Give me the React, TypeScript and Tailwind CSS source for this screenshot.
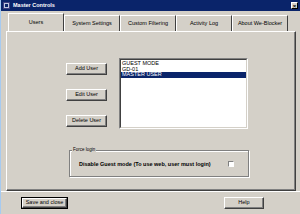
import React from "react";

const raised =
  "border border-t-white border-l-white border-r-[#404040] border-b-[#404040] shadow-[inset_-1px_-1px_0_#808080]";

function Btn({ label, w, def }: { label: string; w: string; def?: boolean }) {
  return (
    <div className={`${def ? "border border-black" : ""} ${w} h-[12px] flex`}>
      <div className={`${raised} flex-1 flex items-center justify-center bg-[#d4d0c8] text-[5.5px] leading-none text-black`}>
        {label}
      </div>
    </div>
  );
}

function Tab({ label, selected }: { label: string; selected?: boolean }) {
  return (
    <div
      className={`w-[56px] flex items-center justify-center border-t border-l border-t-white border-l-white border-r border-r-[#404040] text-[5.5px] leading-none text-black bg-[#d4d0c8] ${
        selected ? "h-[18px] -mb-[1px] z-10 relative" : "h-[16px] mt-[2px]"
      }`}
    >
      {label}
    </div>
  );
}

export default function App() {
  return (
    <div
      className="w-[300px] h-[214px] bg-[#d4d0c8] flex flex-col overflow-hidden border-l border-l-[#a6caf0]"
      style={{ fontFamily: '"Liberation Sans", Arial, sans-serif' }}
    >
      <div className="h-[11px] bg-[#0a246a] flex items-center px-[2px] shrink-0">
        <div className="w-[7px] h-[7px] bg-[#c0c8e0] border border-[#404080] flex items-center justify-center">
          <div className="w-[3px] h-[3px] bg-[#0a246a]" />
        </div>
        <span className="ml-[3px] text-white font-bold text-[5.5px] leading-none">Master Controls</span>
        <div className="ml-auto w-[7px] h-[7px] bg-[#d4d0c8] border border-t-white border-l-white border-r-black border-b-black flex items-center justify-center text-[6px] leading-none text-black font-bold">
          ×
        </div>
      </div>
      <div className="flex flex-col pl-[5px] pr-[4px] pt-[2px]">
        <div className="flex ml-[2px]">
          <Tab label="Users" selected />
          <Tab label="System Settings" />
          <Tab label="Custom Filtering" />
          <Tab label="Activity Log" />
          <Tab label="About We-Blocker" />
        </div>
        <div className="h-[160px] border border-t-white border-l-white border-r-[#404040] border-b-[#404040] shadow-[inset_-1px_-1px_0_#808080] flex flex-col">
          <div className="flex ml-[59px] mt-[26px]">
            <div className="w-[41px] flex flex-col pt-[5px] gap-[14px]">
              <Btn label="Add User" w="w-[41px]" />
              <Btn label="Edit User" w="w-[41px]" />
              <Btn label="Delete User" w="w-[41px]" />
            </div>
            <div className="ml-[12px] w-[129px] h-[71px] border border-t-[#808080] border-l-[#808080] border-r-white border-b-white">
              <div className="h-full bg-white border border-t-[#404040] border-l-[#404040] border-r-[#d4d0c8] border-b-[#d4d0c8] pt-[1px] text-[5.5px] leading-[5.5px] text-black">
                <div className="px-[1px]">GUEST MODE</div>
                <div className="px-[1px]">GD-01</div>
                <div className="px-[1px] bg-[#0a246a] text-white">MASTER USER</div>
              </div>
            </div>
          </div>
          <div className="ml-[62px] mt-[21px] w-[180px] h-[27px] border border-[#808080] shadow-[1px_1px_0_white,inset_1px_1px_0_white] relative flex items-center">
            <span className="absolute -top-[3px] left-[2px] px-[1px] bg-[#d4d0c8] text-[4.5px] leading-none text-black">
              Force login
            </span>
            <span className="ml-[9px] mt-[3px] font-bold text-[5.5px] leading-none text-black">
              Disable Guest mode (To use web, user must login)
            </span>
            <div className="ml-auto mr-[14px] mt-[1px] w-[6px] h-[6px] bg-white border border-t-[#808080] border-l-[#808080] border-r-white border-b-white" />
          </div>
        </div>
      </div>
      <div className="h-[1px] bg-white" />
      <div className="flex items-center mt-[5px] pl-[20px]">
        <Btn label="Save and close" w="w-[47px]" def />
        <div className="ml-auto mr-[36px]">
          <Btn label="Help" w="w-[40px]" />
        </div>
      </div>
    </div>
  );
}
